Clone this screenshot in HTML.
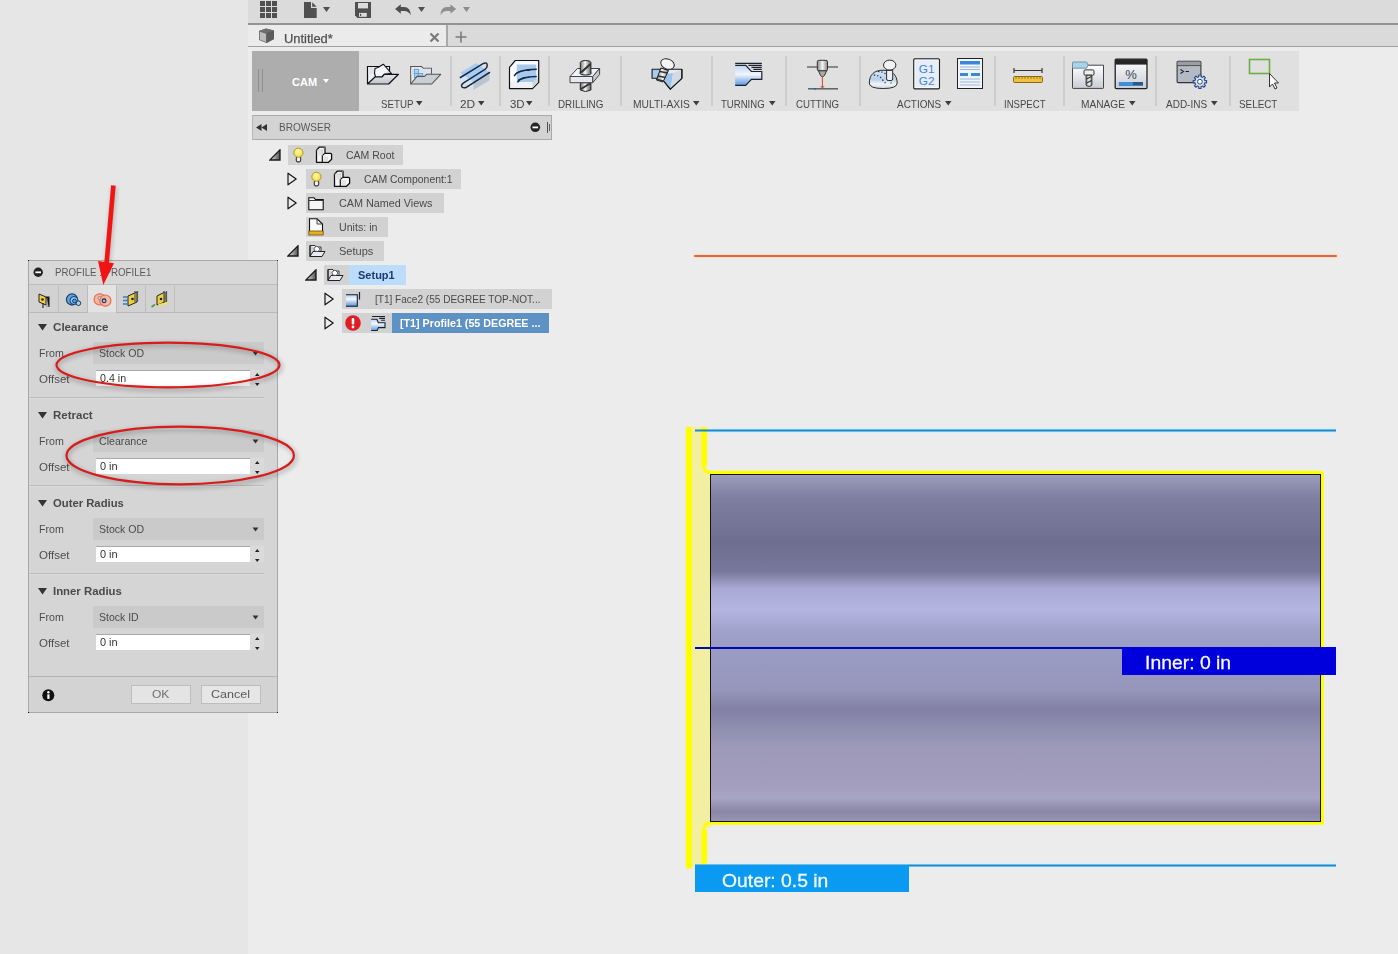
<!DOCTYPE html>
<html><head><meta charset="utf-8">
<style>
*{margin:0;padding:0;box-sizing:border-box}
html,body{width:1398px;height:954px;overflow:hidden;background:#ececec;font-family:"Liberation Sans",sans-serif;position:relative}
.a{position:absolute;display:block}
.t{position:absolute;white-space:nowrap;line-height:1}
</style></head><body>
<div class="a" style="left:0px;top:0px;width:248px;height:954px;background:#e6e6e6;"></div>
<div class="a" style="left:248px;top:0px;width:1150px;height:23px;background:#dbdbdb;"></div>
<div class="a" style="left:248px;top:23px;width:1150px;height:2px;background:#939393;"></div>
<div class="a" style="left:248px;top:25px;width:1150px;height:21px;background:#dadada;"></div>
<div class="a" style="left:248px;top:25px;width:198px;height:21px;background:#ebebeb;"></div>
<div class="a" style="left:446px;top:25px;width:2px;height:21px;background:#a9a9a9;"></div>
<div class="a" style="left:248px;top:46px;width:1150px;height:1px;background:#a0a0a0;"></div>
<svg class="a" style="left:260px;top:1px;" width="17" height="17" viewBox="0 0 17 17"><rect x="0" y="0" width="5" height="5" fill="#505050"/><rect x="0" y="6" width="5" height="5" fill="#505050"/><rect x="0" y="12" width="5" height="5" fill="#505050"/><rect x="6" y="0" width="5" height="5" fill="#505050"/><rect x="6" y="6" width="5" height="5" fill="#505050"/><rect x="6" y="12" width="5" height="5" fill="#505050"/><rect x="12" y="0" width="5" height="5" fill="#505050"/><rect x="12" y="6" width="5" height="5" fill="#505050"/><rect x="12" y="12" width="5" height="5" fill="#505050"/></svg>
<svg class="a" style="left:304px;top:2px;" width="13" height="16" viewBox="0 0 13 16"><path d="M0 0H7V6H12.7V16H0Z" fill="#505050"/><path d="M8.2 0.3L12.7 4.8H8.2Z" fill="#505050"/></svg>
<svg class="a" style="left:323px;top:7px;" width="8" height="6" viewBox="0 0 8 6"><path d="M0 0H7L3.5 5Z" fill="#505050"/></svg>
<svg class="a" style="left:355px;top:2px;" width="16" height="16" viewBox="0 0 16 16"><path d="M0 0H16V16H2.5L0 13.5Z" fill="#505050"/><rect x="3" y="1" width="10" height="5.4" fill="#dcdcdc"/><rect x="4" y="10.9" width="7.8" height="3.9" fill="#dcdcdc"/><rect x="5" y="11.8" width="1.2" height="2.2" fill="#505050"/></svg>
<svg class="a" style="left:394px;top:3px;" width="18" height="14" viewBox="0 0 18 14"><path d="M1.1 6L6.8 1.2V3.9H10Q16.7 3.9 16.7 12.6Q15 8.1 10 8.1H6.8V10.8Z" fill="#505050"/></svg>
<svg class="a" style="left:418px;top:7px;" width="8" height="6" viewBox="0 0 8 6"><path d="M0 0H7L3.5 5Z" fill="#505050"/></svg>
<svg class="a" style="left:440px;top:3px;" width="17" height="14" viewBox="0 0 17 14"><path d="M16.1 6L10.4 1.2V3.9H7Q0.5 3.9 0.5 12.6Q2.2 8.1 7 8.1H10.4V10.8Z" fill="#8e8e8e"/></svg>
<svg class="a" style="left:463px;top:7px;" width="8" height="6" viewBox="0 0 8 6"><path d="M0 0H7L3.5 5Z" fill="#8a8a8a"/></svg>
<svg class="a" style="left:258px;top:28px;" width="17" height="16" viewBox="0 0 17 16"><path d="M1 3L8 0.5L16 2.5L16 11L8.5 15L1 12Z" fill="#6a6a6a"/><path d="M1 3L8 0.5L16 2.5L8.5 5Z" fill="#6e6e6e"/><path d="M8.5 5L16 2.5V11L8.5 15Z" fill="#5c5c5c"/><path d="M1.8 3.8L8 5.7V14L1.8 11.5Z" fill="#bcbcbc"/></svg>
<div class="t" style="left:284px;top:33px;font-size:12.5px;color:#505050;font-weight:400;letter-spacing:0px;transform:scaleX(1.0326);transform-origin:0 0;-webkit-text-stroke:0.25px #505050;">Untitled*</div>
<svg class="a" style="left:429px;top:32px;" width="11" height="11" viewBox="0 0 11 11"><path d="M1.5 1.5L9.5 9.5M9.5 1.5L1.5 9.5" stroke="#7a7a7a" stroke-width="2.2"/></svg>
<svg class="a" style="left:455px;top:31px;" width="12" height="12" viewBox="0 0 12 12"><path d="M6 0.5V11.5M0.5 6H11.5" stroke="#7a7a7a" stroke-width="1.6"/></svg>
<div class="a" style="left:252px;top:51px;width:1047px;height:60px;background:#e0e0e0;"></div>
<div class="a" style="left:252px;top:51px;width:107px;height:60px;background:#adadad;"></div>
<div class="a" style="left:258px;top:69px;width:1px;height:23px;background:#8e8e8e;"></div>
<div class="a" style="left:262px;top:69px;width:1px;height:23px;background:#8e8e8e;"></div>
<div class="t" style="left:292px;top:77px;font-size:11px;color:#ffffff;font-weight:700;letter-spacing:0px;">CAM</div>
<svg class="a" style="left:323px;top:79px;" width="7" height="5" viewBox="0 0 7 5"><path d="M0 0H6L3 4Z" fill="#fff"/></svg>
<div class="a" style="left:450px;top:56px;width:2px;height:50px;background:#cdcdcd;"></div>
<div class="a" style="left:499px;top:56px;width:2px;height:50px;background:#cdcdcd;"></div>
<div class="a" style="left:548px;top:56px;width:2px;height:50px;background:#cdcdcd;"></div>
<div class="a" style="left:620px;top:56px;width:2px;height:50px;background:#cdcdcd;"></div>
<div class="a" style="left:711px;top:56px;width:2px;height:50px;background:#cdcdcd;"></div>
<div class="a" style="left:785px;top:56px;width:2px;height:50px;background:#cdcdcd;"></div>
<div class="a" style="left:859px;top:56px;width:2px;height:50px;background:#cdcdcd;"></div>
<div class="a" style="left:994px;top:56px;width:2px;height:50px;background:#cdcdcd;"></div>
<div class="a" style="left:1063px;top:56px;width:2px;height:50px;background:#cdcdcd;"></div>
<div class="a" style="left:1155px;top:56px;width:2px;height:50px;background:#cdcdcd;"></div>
<div class="a" style="left:1229px;top:56px;width:2px;height:50px;background:#cdcdcd;"></div>
<div class="t" style="left:380.6px;top:100px;font-size:10.3px;color:#474747;font-weight:400;letter-spacing:0px;transform:scaleX(0.9426);transform-origin:0 0;">SETUP</div>
<svg class="a" style="left:415.5px;top:101px;" width="7" height="5" viewBox="0 0 7 5"><path d="M0 0H6.5L3.25 4.5Z" fill="#3c3c3c"/></svg>
<div class="t" style="left:460.3px;top:100px;font-size:10.3px;color:#474747;font-weight:400;letter-spacing:0px;transform:scaleX(1.1530);transform-origin:0 0;">2D</div>
<svg class="a" style="left:477.5px;top:101px;" width="7" height="5" viewBox="0 0 7 5"><path d="M0 0H6.5L3.25 4.5Z" fill="#3c3c3c"/></svg>
<div class="t" style="left:509.6px;top:100px;font-size:10.3px;color:#474747;font-weight:400;letter-spacing:0px;transform:scaleX(1.1119);transform-origin:0 0;">3D</div>
<svg class="a" style="left:525.5px;top:101px;" width="7" height="5" viewBox="0 0 7 5"><path d="M0 0H6.5L3.25 4.5Z" fill="#3c3c3c"/></svg>
<div class="t" style="left:558.4px;top:100px;font-size:10.3px;color:#474747;font-weight:400;letter-spacing:0px;transform:scaleX(0.9555);transform-origin:0 0;">DRILLING</div>
<div class="t" style="left:632.9px;top:100px;font-size:10.3px;color:#474747;font-weight:400;letter-spacing:0px;transform:scaleX(0.9982);transform-origin:0 0;">MULTI-AXIS</div>
<svg class="a" style="left:692.5px;top:101px;" width="7" height="5" viewBox="0 0 7 5"><path d="M0 0H6.5L3.25 4.5Z" fill="#3c3c3c"/></svg>
<div class="t" style="left:721.4px;top:100px;font-size:10.3px;color:#474747;font-weight:400;letter-spacing:0px;transform:scaleX(0.9308);transform-origin:0 0;">TURNING</div>
<svg class="a" style="left:768.5px;top:101px;" width="7" height="5" viewBox="0 0 7 5"><path d="M0 0H6.5L3.25 4.5Z" fill="#3c3c3c"/></svg>
<div class="t" style="left:795.6px;top:100px;font-size:10.3px;color:#474747;font-weight:400;letter-spacing:0px;transform:scaleX(0.9388);transform-origin:0 0;">CUTTING</div>
<div class="t" style="left:897.4px;top:100px;font-size:10.3px;color:#474747;font-weight:400;letter-spacing:0px;transform:scaleX(0.9653);transform-origin:0 0;">ACTIONS</div>
<svg class="a" style="left:945px;top:101px;" width="7" height="5" viewBox="0 0 7 5"><path d="M0 0H6.5L3.25 4.5Z" fill="#3c3c3c"/></svg>
<div class="t" style="left:1004.4px;top:100px;font-size:10.3px;color:#474747;font-weight:400;letter-spacing:0px;transform:scaleX(0.9310);transform-origin:0 0;">INSPECT</div>
<div class="t" style="left:1080.6px;top:100px;font-size:10.3px;color:#474747;font-weight:400;letter-spacing:0px;transform:scaleX(0.9860);transform-origin:0 0;">MANAGE</div>
<svg class="a" style="left:1128.5px;top:101px;" width="7" height="5" viewBox="0 0 7 5"><path d="M0 0H6.5L3.25 4.5Z" fill="#3c3c3c"/></svg>
<div class="t" style="left:1165.5px;top:100px;font-size:10.3px;color:#474747;font-weight:400;letter-spacing:0px;transform:scaleX(0.9706);transform-origin:0 0;">ADD-INS</div>
<svg class="a" style="left:1210.5px;top:101px;" width="7" height="5" viewBox="0 0 7 5"><path d="M0 0H6.5L3.25 4.5Z" fill="#3c3c3c"/></svg>
<div class="t" style="left:1239.4px;top:100px;font-size:10.3px;color:#474747;font-weight:400;letter-spacing:0px;transform:scaleX(0.9582);transform-origin:0 0;">SELECT</div>
<svg class="a" style="left:362px;top:56px;" width="84" height="36" viewBox="0 0 84 36"><defs>
<linearGradient id="gw" x1="0" y1="0" x2="0" y2="1"><stop offset="0" stop-color="#ffffff"/><stop offset="1" stop-color="#c8ccd4"/></linearGradient>
<linearGradient id="gb" x1="0" y1="0" x2="0" y2="1"><stop offset="0" stop-color="#d6e6f8"/><stop offset="0.5" stop-color="#4a90d8"/><stop offset="1" stop-color="#d6e6f8"/></linearGradient>
<linearGradient id="gm" x1="0" y1="0" x2="1" y2="0"><stop offset="0" stop-color="#888"/><stop offset="0.5" stop-color="#f4f4f4"/><stop offset="1" stop-color="#888"/></linearGradient>
</defs><defs><linearGradient id="gbox" x1="0" y1="0" x2="1" y2="1"><stop offset="0" stop-color="#ffffff"/><stop offset="0.6" stop-color="#f0f4fa"/><stop offset="1" stop-color="#8ea8c8"/></linearGradient><linearGradient id="gfl" x1="0" y1="0" x2="0" y2="1"><stop offset="0" stop-color="#e4e6ea"/><stop offset="1" stop-color="#c0c4cc"/></linearGradient></defs><path d="M5.5 28V10.5H27.5V18" fill="#eef0f4" stroke="#111" stroke-width="1.2"/><path d="M6 11H27V18H6Z" fill="#e2e6ec"/><path d="M13 12.5L16 11.5L21.3 8.2L29.5 17.5L22.3 18.3L20 21H13.5L12.5 17Z" fill="url(#gbox)" stroke="#111" stroke-width="1.1" stroke-linejoin="round"/><path d="M5.5 28H26.7L36.5 18.3H22.3L20 21H13L5.5 28Z" fill="url(#gfl)" stroke="#111" stroke-width="1.2" stroke-linejoin="round"/><path d="M48.7 28V10.5H59.5L61.3 12.3H69.4V18.3" fill="#e8ebf0" stroke="#555" stroke-width="1.1"/><path d="M49.2 12.8H69V19H49.2Z" fill="#dde2ea"/><rect x="52.3" y="13.2" width="4.2" height="4.2" fill="#a8d0f4" stroke="#5a9ad8" stroke-width="0.8"/><rect x="52.3" y="17.4" width="4.2" height="4.2" fill="#a8d0f4" stroke="#5a9ad8" stroke-width="0.8"/><rect x="56.5" y="17.4" width="4.2" height="4.2" fill="#a8d0f4" stroke="#5a9ad8" stroke-width="0.8"/><path d="M48.7 28H69.7L78.7 18.3H64.6L62.5 20.4H55L48.7 28Z" fill="#c8ccd4" fill-opacity="0.92" stroke="#555" stroke-width="1.1" stroke-linejoin="round"/></svg>
<svg class="a" style="left:454px;top:56px;" width="42" height="38" viewBox="0 0 42 38"><path d="M6 17L22 7L35 16L19.5 26Z" fill="#a8ccf0"/><path d="M6 17V24L19.5 34V26Z" fill="#d8e4f0"/><path d="M19.5 26V34L35.5 24.3V16Z" fill="#b8c4d0"/><path d="M6.4 21.5L29 7.6Q33.5 5.5 33.2 10Q33 12 31 13.3L10 26.6Q6.5 29 8 31Q10 32.8 13 30.8L35.5 16.5" fill="none" stroke="#1a2a48" stroke-width="1.5" stroke-linecap="round"/></svg>
<svg class="a" style="left:504px;top:55px;" width="42" height="38" viewBox="0 0 42 38"><path d="M5.5 12.4L11.3 5.5H34.7V27.4L28.5 33.6H5.5Z" fill="#eef2f6" stroke="#111" stroke-width="1.2" stroke-linejoin="round"/><path d="M6.5 12.5L11.8 6.5H33.7V10H12.8V27H6.5Z" fill="#fafcff"/><rect x="12.8" y="9.5" width="19.3" height="17.5" fill="#a8c8ec"/><path d="M28.5 27.5L33.8 22V27L28.5 32.8Z" fill="#d0d6de"/><path d="M10.2 21.2Q13 14.6 32.8 14.2M13.5 27.4Q16.8 21.5 32.8 21.5" fill="none" stroke="#10284a" stroke-width="1.5"/><path d="M11 19Q16 15 26 15.5M14 25Q18 22 26 22.3" fill="none" stroke="#10284a" stroke-width="0.9"/></svg>
<svg class="a" style="left:504px;top:55px;" width="102" height="38" viewBox="0 0 102 38"><defs><linearGradient id="gdr" x1="0" y1="0" x2="1" y2="0"><stop offset="0" stop-color="#707070"/><stop offset="0.45" stop-color="#f8f8f8"/><stop offset="1" stop-color="#606060"/></linearGradient></defs><path d="M76.3 27.7V35L81.5 36.5L86.9 35V27.7Z" fill="url(#gdr)" stroke="#222" stroke-width="1"/><path d="M77 34L86 28.5" stroke="#333" stroke-width="2"/><path d="M66 21.5L73.4 13.5H95.6L88.7 21.5Z" fill="#f0f4f8" stroke="#444" stroke-width="1"/><path d="M66 21.5H88.7V27.7H66Z" fill="#e6e8ec" stroke="#444" stroke-width="1"/><path d="M88.7 21.5L95.6 13.5V19.5L88.7 27.7Z" fill="#c8ccd2" stroke="#444" stroke-width="1"/><ellipse cx="81.6" cy="18" rx="7" ry="2.8" fill="#9cc8ee"/><path d="M76.3 7.5Q76.3 5.5 81.6 5.5Q86.9 5.5 86.9 7.5V18.5Q86.9 20 81.6 20Q76.3 20 76.3 18.5Z" fill="url(#gdr)" stroke="#222" stroke-width="1"/><path d="M77 17.5L86.5 9" stroke="#333" stroke-width="2.2"/></svg>
<svg class="a" style="left:646px;top:54px;" width="44" height="40" viewBox="0 0 44 40"><path d="M6.1 15.3H35.9V24.3L24.3 35.2L18 27.3L12 24.3H6.1Z" fill="#a8ccf0" stroke="#1a1a1a" stroke-width="1.1" stroke-linejoin="round"/><path d="M22 16H35V24L24.3 34.5L21 29Z" fill="#e8ecf2"/><path d="M19.5 20L27 19L24.8 34.3L18.2 27.5Z" fill="#9cc4ec"/><path d="M27 19L35 16V24L25 34Z" fill="#d4dae2"/><path d="M35.9 15.3V24.3L24.3 35.2L18 27.3" fill="none" stroke="#1a1a1a" stroke-width="1.1"/><path d="M14.8 14L22.5 16.5L17 28L10.5 26Z" fill="url(#gm)" stroke="#1a1a1a" stroke-width="1"/><path d="M14 17.5L21.5 19M12 22L19.5 23.5M11 25.5L17.5 27" stroke="#333" stroke-width="1.5"/><ellipse cx="21.5" cy="10" rx="7" ry="5" fill="#f4f4f6" stroke="#222" stroke-width="1" transform="rotate(22 21.5 10)"/></svg>
<svg class="a" style="left:728px;top:56px;" width="42" height="36" viewBox="0 0 42 36"><defs><linearGradient id="gt" x1="0" y1="0" x2="0" y2="1"><stop offset="0" stop-color="#b8d8f8"/><stop offset="0.45" stop-color="#f4f4fc"/><stop offset="1" stop-color="#5a98e0"/></linearGradient></defs><path d="M7.2 9.4H17.7L23.4 15.5H33.8V23.4H23.4L17.7 29.4H7.2Z" fill="url(#gt)"/><path d="M7.2 9.4H17.7L23.4 15.5H33.8V23.4H23.4L17.7 29.4H7.2" fill="none" stroke="#1a2230" stroke-width="1.2"/><path d="M7.2 7.4H33.8M20.4 9.4H33.8M23.4 11.4H33.8M25.3 13.4H33.8" stroke="#1a2230" stroke-width="1.2"/></svg>
<svg class="a" style="left:806px;top:59px;" width="34" height="32" viewBox="0 0 34 32"><path d="M1 8H11M21.5 8H32" stroke="#333" stroke-width="1.2"/><rect x="11.3" y="1.3" width="10.2" height="10.5" rx="1.5" fill="url(#gm)" stroke="#333" stroke-width="1"/><path d="M12.5 11.8H20.5L18.5 16.5L16.4 18L14.5 16.5Z" fill="#aaa" stroke="#333" stroke-width="1"/><path d="M16.4 18V28.5" stroke="#e04020" stroke-width="1"/><path d="M14.6 27L16.4 29L18.2 27" fill="none" stroke="#e04020" stroke-width="1"/><path d="M2 29.8H32" stroke="#606870" stroke-width="1.6"/><path d="M8 29.8H10" stroke="#2060c0" stroke-width="1.6"/></svg>
<svg class="a" style="left:864px;top:56px;" width="40" height="36" viewBox="0 0 40 36"><defs><linearGradient id="gj" x1="0" y1="0" x2="0" y2="1"><stop offset="0" stop-color="#d8e6f4"/><stop offset="0.5" stop-color="#b8d0ec"/><stop offset="0.75" stop-color="#f0f4f8"/><stop offset="1" stop-color="#d8dce2"/></linearGradient></defs><path d="M5.3 27C5.3 19 10 14.2 19 14.2C28 14.2 33.2 19 33.2 27Q33.2 32.5 19.2 32.5Q5.3 32.5 5.3 27Z" fill="url(#gj)" stroke="#2a2a2a" stroke-width="1"/><path d="M9.8 19.2Q15 19 17.5 22.5Q20 26 22.3 27.5M14 15.5Q19 15.5 21.5 17.7M27 26.5V27.5" fill="none" stroke="#1a2a48" stroke-width="1.2" stroke-dasharray="1.3 2"/><path d="M22.6 14.3H28.7V23Q28.7 24.5 27 24.5H24.3Q22.6 24.5 22.6 23Z" fill="#f0f0f2" stroke="#2a2a2a" stroke-width="1"/><ellipse cx="25.7" cy="9.1" rx="6.2" ry="5" fill="#f2f2f4" stroke="#2a2a2a" stroke-width="1"/></svg>
<svg class="a" style="left:913px;top:58px;" width="28" height="32" viewBox="0 0 28 32"><rect x="0.8" y="0.8" width="25.6" height="30" rx="1" fill="#e6edf5" stroke="#222" stroke-width="1.3"/><rect x="2" y="2" width="23.2" height="27.6" fill="none" stroke="#fafcff" stroke-width="0.8"/><text x="13.6" y="15" font-family="Liberation Sans" font-size="11.8" fill="#4088d8" text-anchor="middle">G1</text><text x="13.6" y="27.3" font-family="Liberation Sans" font-size="11.8" fill="#4088d8" text-anchor="middle">G2</text></svg>
<svg class="a" style="left:957px;top:58px;" width="27" height="32" viewBox="0 0 27 32"><rect x="0.5" y="0.5" width="25" height="30" fill="#f0f4f8" stroke="#222" stroke-width="1"/><rect x="3" y="3" width="20" height="3.5" fill="#3a88d8"/><path d="M3 9H23M3 11.5H23" stroke="#9ab8d8" stroke-width="1"/><rect x="3" y="15" width="8" height="3" fill="#3a88d8"/><rect x="14" y="15" width="9" height="3" fill="#3a88d8"/><path d="M3 21H23M3 24H23M3 27H23" stroke="#9ab8d8" stroke-width="1"/></svg>
<svg class="a" style="left:1013px;top:66px;" width="31" height="18" viewBox="0 0 31 18"><path d="M1 2V7M1 4.5H29M29 2V7" stroke="#333" stroke-width="1.2"/><rect x="0.5" y="10.5" width="29" height="6" rx="1" fill="#f0c040" stroke="#8a6a10" stroke-width="1"/><path d="M3 11V13M6 11V13M9 11V13M12 11V13M15 11V13M18 11V13M21 11V13M24 11V13M27 11V13" stroke="#8a6a10" stroke-width="0.8"/></svg>
<svg class="a" style="left:1066px;top:54px;" width="42" height="38" viewBox="0 0 42 38"><path d="M6.5 11.2H37.5V33.8Q37.5 34.4 36.9 34.4H7.1Q6.5 34.4 6.5 33.8Z" fill="url(#gw)" stroke="#444" stroke-width="1"/><path d="M6.5 14.2V8.6Q6.5 8 7.1 8H20.5L22.2 11.2L20.5 14.2Z" fill="#a8d4ec" stroke="#6a8aa0" stroke-width="0.9"/><rect x="18" y="15.9" width="10" height="5.3" rx="1.2" fill="#f0f0f0" stroke="#333" stroke-width="1"/><path d="M20.1 21.2H25.9V31Q25.9 32 23 32.4Q20.1 32 20.1 31Z" fill="url(#gm)" stroke="#333" stroke-width="1"/><path d="M20.5 25L25.5 22.5M20.5 29L25.5 26.5" stroke="#333" stroke-width="1.2"/></svg>
<svg class="a" style="left:1114px;top:58px;" width="34" height="32" viewBox="0 0 34 32"><rect x="1.2" y="1.2" width="31.8" height="29.4" rx="1" fill="url(#gw)" stroke="#222" stroke-width="1.3"/><rect x="1.2" y="1.2" width="31.8" height="5.4" fill="#262626"/><text x="17" y="20.5" font-family="Liberation Sans" font-size="13" fill="#34465a" text-anchor="middle">%</text><rect x="4.9" y="24" width="24.1" height="3.7" fill="#2a5a8a"/><rect x="4.9" y="24" width="14" height="3.7" fill="#3a90dc"/></svg>
<svg class="a" style="left:1176px;top:60px;" width="32" height="30" viewBox="0 0 32 30"><rect x="1.1" y="1.2" width="23.8" height="21.4" rx="1" fill="#b4bac4" stroke="#333" stroke-width="1.1"/><rect x="1.6" y="1.7" width="22.8" height="3.6" fill="#9a9ea6"/><path d="M1.1 5.6H24.9" stroke="#444" stroke-width="0.9"/><path d="M4.5 9.5L7.5 11.5L4.5 13.5M9.5 11.5H13" fill="none" stroke="#222" stroke-width="1.1"/><path d="M30.60 20.55 L30.60 22.85 L28.78 22.80 L28.13 24.37 L29.45 25.63 L27.83 27.25 L26.57 25.93 L25.00 26.58 L25.05 28.40 L22.75 28.40 L22.80 26.58 L21.23 25.93 L19.97 27.25 L18.35 25.63 L19.67 24.37 L19.02 22.80 L17.20 22.85 L17.20 20.55 L19.02 20.60 L19.67 19.03 L18.35 17.77 L19.97 16.15 L21.23 17.47 L22.80 16.82 L22.75 15.00 L25.05 15.00 L25.00 16.82 L26.57 17.47 L27.83 16.15 L29.45 17.77 L28.13 19.03 L28.78 20.60Z" fill="#dce6f2" stroke="#2a4a80" stroke-width="1.1" stroke-linejoin="round"/><circle cx="23.9" cy="21.7" r="2.4" fill="#fff" stroke="#2a4a80" stroke-width="1"/></svg>
<svg class="a" style="left:1248px;top:58px;" width="32" height="32" viewBox="0 0 32 32"><rect x="1.5" y="1.5" width="20" height="14" fill="none" stroke="#6ab040" stroke-width="1.6"/><path d="M21.5 15.5V29L24.5 26L27 31L29 30L26.5 25H30.5Z" fill="#fafafa" stroke="#333" stroke-width="1" stroke-linejoin="round"/></svg>
<svg class="a" style="left:248px;top:112px;" width="1150" height="842" viewBox="0 0 1150 842"><defs>
<linearGradient id="part" x1="0" y1="0" x2="0" y2="1">
<stop offset="0" stop-color="#9c9cbc"/>
<stop offset="0.07" stop-color="#7e7ea0"/>
<stop offset="0.2" stop-color="#6e6e90"/>
<stop offset="0.28" stop-color="#78789c"/>
<stop offset="0.33" stop-color="#aaaad6"/>
<stop offset="0.39" stop-color="#b4b4e0"/>
<stop offset="0.45" stop-color="#a0a2cc"/>
<stop offset="0.5" stop-color="#9a9cc4"/>
<stop offset="0.62" stop-color="#9696bc"/>
<stop offset="0.675" stop-color="#8280a4"/>
<stop offset="0.735" stop-color="#9090b0"/>
<stop offset="0.78" stop-color="#9c98b8"/>
<stop offset="0.9" stop-color="#a49ebe"/>
<stop offset="0.93" stop-color="#a8a4c4"/>
<stop offset="0.97" stop-color="#8a86a6"/>
<stop offset="1" stop-color="#9a96b6"/>
</linearGradient>
<filter id="glow" x="-5%" y="-50%" width="110%" height="200%"><feGaussianBlur stdDeviation="1.2"/></filter>
</defs><path d="M446.5 144H1088" stroke="#ffe0d0" stroke-width="5" stroke-linecap="round"/><path d="M447 144H1088" stroke="#d46a48" stroke-width="2.2" stroke-linecap="round"/><rect x="443" y="315" width="12" height="439" fill="#f2f0a0"/><rect x="454.5" y="358" width="8" height="358" fill="#f2f0a0"/><rect x="437.79999999999995" y="314.8" width="6" height="442" rx="2" fill="#ffff00"/><path d="M456.29999999999995 315V355Q456.29999999999995 360.4 462 360.4H1072.5Q1074.2 360.6 1074.2 362.5V711.1H462Q456.29999999999995 711.1 456.29999999999995 717V751.5" fill="none" stroke="#ffff00" stroke-width="3.3"/><path d="M456.29999999999995 315V354M456.29999999999995 718V751.5" fill="none" stroke="#ffff00" stroke-width="5.5"/><rect x="462" y="362" width="611" height="348" fill="url(#part)"/><rect x="462.5" y="362.5" width="610" height="347" fill="none" stroke="#151515" stroke-width="1"/><path d="M460 318.5H1088" stroke="#d0f0ff" stroke-width="5"/><path d="M447 318.5H1088" stroke="#1a86cc" stroke-width="2.2"/><path d="M460 753.5H1088" stroke="#d0f0ff" stroke-width="4"/><path d="M447 753.5H1088" stroke="#1a86cc" stroke-width="2"/><path d="M447 536H1088" stroke="#0008b0" stroke-width="2"/></svg>
<div class="a" style="left:695px;top:865px;width:214px;height:27px;background:#0a9af2;"></div>
<div class="t" style="left:722px;top:871px;font-size:19px;color:#f4ffff;font-weight:400;letter-spacing:0px;transform:scaleX(1.0169);transform-origin:0 0;-webkit-text-stroke:0.3px #f4ffff;">Outer: 0.5 in</div>
<div class="a" style="left:1122px;top:647px;width:214px;height:28px;background:#0000dc;"></div>
<div class="t" style="left:1145.2px;top:653px;font-size:19px;color:#f8f8ff;font-weight:400;letter-spacing:0px;transform:scaleX(1.0194);transform-origin:0 0;-webkit-text-stroke:0.3px #f8f8ff;">Inner: 0 in</div>
<div class="a" style="left:252px;top:115px;width:300px;height:25px;background:#d3d3d3;border-top:1px solid #a9a9a9;border-bottom:1px solid #ababab;border-left:1px solid #b8b8b8;border-right:1px solid #a9a9a9"></div>
<svg class="a" style="left:256px;top:124px;" width="12" height="8" viewBox="0 0 12 8"><path d="M5.5 0V7L0 3.5Z M11 0V7L5.5 3.5Z" fill="#333"/></svg>
<div class="t" style="left:279px;top:123px;font-size:10.3px;color:#585858;font-weight:400;letter-spacing:0px;transform:scaleX(0.9791);transform-origin:0 0;">BROWSER</div>
<svg class="a" style="left:530px;top:122px;" width="11" height="11" viewBox="0 0 11 11"><circle cx="5.3" cy="5.3" r="4.8" fill="#262626"/><rect x="2.5" y="4.5" width="5.6" height="1.8" fill="#fff"/></svg>
<div class="a" style="left:547px;top:122px;width:1px;height:11px;background:#505050;"></div>
<div class="a" style="left:549px;top:124px;width:1px;height:7px;background:#606060;"></div>
<svg class="a" style="left:269px;top:149px;" width="12" height="12" viewBox="0 0 12 12"><defs><linearGradient id="ge" x1="0" y1="0" x2="1" y2="0"><stop offset="0" stop-color="#f0f0f0"/><stop offset="1" stop-color="#505050"/></linearGradient></defs><path d="M11 0.8V11H0.8Z" fill="url(#ge)" stroke="#1a1a1a" stroke-width="1.3" stroke-linejoin="miter"/></svg>
<div class="a" style="left:288px;top:145px;width:115px;height:20px;background:#d2d2d2;"></div>
<svg class="a" style="left:293px;top:147px;" width="12" height="16" viewBox="0 0 12 16"><defs><radialGradient id="gbulb" cx="0.45" cy="0.4" r="0.6"><stop offset="0" stop-color="#fff8a0"/><stop offset="1" stop-color="#f0dc40"/></radialGradient></defs><rect x="3.3" y="9.5" width="4.4" height="5.4" rx="1.6" fill="#f4f4f8" stroke="#333" stroke-width="1.1"/><circle cx="5.4" cy="5.7" r="4.6" fill="url(#gbulb)" stroke="#a89030" stroke-width="0.9"/></svg>
<svg class="a" style="left:315px;top:146px;" width="18" height="18" viewBox="0 0 18 18"><path d="M1.5 4.1L4.2 1.2H10V7.4H15.8L16.6 8.2V13.2L13.5 16.3H1.5Z" fill="#f6f6f6" stroke="#111" stroke-width="1.3" stroke-linejoin="round"/><path d="M2.5 5H7V9.5H2.5Z M8.5 10.5H13V15H8.5Z" fill="#e4e4e4"/><path d="M7.3 16.3V9.7L9.6 7.4" fill="none" stroke="#111" stroke-width="1.2"/><path d="M1.5 4.1H7.3L10 1.2M7.3 4.1V9.7" fill="none" stroke="#bbb" stroke-width="0.8"/></svg>
<div class="t" style="left:345.6px;top:150px;font-size:10.5px;color:#4a4a4a;font-weight:400;letter-spacing:0px;transform:scaleX(1.0003);transform-origin:0 0;">CAM Root</div>
<svg class="a" style="left:287px;top:172px;" width="11" height="14" viewBox="0 0 11 14"><path d="M1 1.2L9.2 7L1 12.8Z" fill="none" stroke="#161616" stroke-width="1.2" stroke-linejoin="round"/></svg>
<div class="a" style="left:306px;top:169px;width:155px;height:20px;background:#d2d2d2;"></div>
<svg class="a" style="left:311px;top:171px;" width="12" height="16" viewBox="0 0 12 16"><defs><radialGradient id="gbulb" cx="0.45" cy="0.4" r="0.6"><stop offset="0" stop-color="#fff8a0"/><stop offset="1" stop-color="#f0dc40"/></radialGradient></defs><rect x="3.3" y="9.5" width="4.4" height="5.4" rx="1.6" fill="#f4f4f8" stroke="#333" stroke-width="1.1"/><circle cx="5.4" cy="5.7" r="4.6" fill="url(#gbulb)" stroke="#a89030" stroke-width="0.9"/></svg>
<svg class="a" style="left:333px;top:170px;" width="18" height="18" viewBox="0 0 18 18"><path d="M1.5 4.1L4.2 1.2H10V7.4H15.8L16.6 8.2V13.2L13.5 16.3H1.5Z" fill="#f6f6f6" stroke="#111" stroke-width="1.3" stroke-linejoin="round"/><path d="M2.5 5H7V9.5H2.5Z M8.5 10.5H13V15H8.5Z" fill="#e4e4e4"/><path d="M7.3 16.3V9.7L9.6 7.4" fill="none" stroke="#111" stroke-width="1.2"/><path d="M1.5 4.1H7.3L10 1.2M7.3 4.1V9.7" fill="none" stroke="#bbb" stroke-width="0.8"/></svg>
<div class="t" style="left:364.4px;top:174px;font-size:10.5px;color:#474747;font-weight:400;letter-spacing:0px;transform:scaleX(0.9915);transform-origin:0 0;">CAM Component:1</div>
<svg class="a" style="left:287px;top:196px;" width="11" height="14" viewBox="0 0 11 14"><path d="M1 1.2L9.2 7L1 12.8Z" fill="none" stroke="#161616" stroke-width="1.2" stroke-linejoin="round"/></svg>
<div class="a" style="left:306px;top:193px;width:138px;height:20px;background:#d2d2d2;"></div>
<svg class="a" style="left:308px;top:197px;" width="17" height="14" viewBox="0 0 17 14"><path d="M0.8 0.8H6L7.5 2.5H15.2V12.8H0.8Z" fill="#f6f6f6" stroke="#111" stroke-width="1.1"/><path d="M0.8 3.5H15" stroke="#222" stroke-width="0.9"/></svg>
<div class="t" style="left:338.5px;top:198px;font-size:10.5px;color:#4a4a4a;font-weight:400;letter-spacing:0px;transform:scaleX(1.0290);transform-origin:0 0;">CAM Named Views</div>
<div class="a" style="left:306px;top:217px;width:82px;height:20px;background:#d2d2d2;"></div>
<svg class="a" style="left:308px;top:218px;" width="17" height="18" viewBox="0 0 17 18"><path d="M1.5 0.8H9L14.5 6V14H1.5Z" fill="#fafafa" stroke="#111" stroke-width="1.1"/><path d="M9 0.8V6H14.5" fill="none" stroke="#333" stroke-width="0.9"/><rect x="0.8" y="13" width="14.4" height="4" fill="#e8b020" stroke="#6a5010" stroke-width="0.8"/></svg>
<div class="t" style="left:338.5px;top:222px;font-size:10.5px;color:#4a4a4a;font-weight:400;letter-spacing:0px;transform:scaleX(1.0139);transform-origin:0 0;">Units: in</div>
<svg class="a" style="left:287px;top:245px;" width="12" height="12" viewBox="0 0 12 12"><defs><linearGradient id="ge" x1="0" y1="0" x2="1" y2="0"><stop offset="0" stop-color="#f0f0f0"/><stop offset="1" stop-color="#505050"/></linearGradient></defs><path d="M11 0.8V11H0.8Z" fill="url(#ge)" stroke="#1a1a1a" stroke-width="1.3" stroke-linejoin="miter"/></svg>
<div class="a" style="left:306px;top:241px;width:78px;height:20px;background:#d2d2d2;"></div>
<svg class="a" style="left:309px;top:244px;" width="17" height="14" viewBox="0 0 17 14"><path d="M1 1.5H6L7 3H12V7" fill="#f4f4f4" stroke="#333" stroke-width="1"/><path d="M1 1.5V12.5L4 7.5H16L13 12.5H1Z" fill="#e8ecf0" stroke="#222" stroke-width="1" stroke-linejoin="round"/><path d="M5 4L8 2L11 5L9 7.5L5.5 7Z" fill="#fff" stroke="#444" stroke-width="0.8"/></svg>
<div class="t" style="left:338.5px;top:246px;font-size:10.5px;color:#4a4a4a;font-weight:400;letter-spacing:0px;transform:scaleX(1.0520);transform-origin:0 0;">Setups</div>
<svg class="a" style="left:305px;top:269px;" width="12" height="12" viewBox="0 0 12 12"><defs><linearGradient id="ge" x1="0" y1="0" x2="1" y2="0"><stop offset="0" stop-color="#f0f0f0"/><stop offset="1" stop-color="#505050"/></linearGradient></defs><path d="M11 0.8V11H0.8Z" fill="url(#ge)" stroke="#1a1a1a" stroke-width="1.3" stroke-linejoin="miter"/></svg>
<div class="a" style="left:324px;top:265px;width:25px;height:20px;background:#d2d2d2;"></div>
<div class="a" style="left:349px;top:265px;width:57px;height:20px;background:#bcdcfc;"></div>
<svg class="a" style="left:327px;top:268px;" width="17" height="14" viewBox="0 0 17 14"><path d="M1 1.5H6L7 3H12V7" fill="#f4f4f4" stroke="#333" stroke-width="1"/><path d="M1 1.5V12.5L4 7.5H16L13 12.5H1Z" fill="#e8ecf0" stroke="#222" stroke-width="1" stroke-linejoin="round"/><path d="M5 4L8 2L11 5L9 7.5L5.5 7Z" fill="#fff" stroke="#444" stroke-width="0.8"/></svg>
<div class="t" style="left:358.3px;top:270px;font-size:10.5px;color:#1c3a70;font-weight:700;letter-spacing:0px;transform:scaleX(1.0481);transform-origin:0 0;">Setup1</div>
<svg class="a" style="left:324px;top:292px;" width="11" height="14" viewBox="0 0 11 14"><path d="M1 1.2L9.2 7L1 12.8Z" fill="none" stroke="#161616" stroke-width="1.2" stroke-linejoin="round"/></svg>
<div class="a" style="left:342px;top:289px;width:210px;height:20px;background:#d2d2d2;"></div>
<svg class="a" style="left:344px;top:290px;" width="18" height="18" viewBox="0 0 18 18"><defs><linearGradient id="gf" x1="0" y1="0" x2="0" y2="1"><stop offset="0" stop-color="#a8ccf0"/><stop offset="0.4" stop-color="#f4f8fc"/><stop offset="1" stop-color="#4a8ad0"/></linearGradient></defs><rect x="2" y="4.2" width="11.8" height="12.5" fill="url(#gf)"/><path d="M2 4.7H13.3V16.2H2" fill="none" stroke="#1a2030" stroke-width="1.1"/><path d="M15.5 2V9.6" stroke="#1a2030" stroke-width="1.2"/></svg>
<div class="t" style="left:375px;top:294px;font-size:10.5px;color:#4a4a4a;font-weight:400;letter-spacing:0px;transform:scaleX(0.9571);transform-origin:0 0;">[T1] Face2 (55 DEGREE TOP-NOT...</div>
<svg class="a" style="left:324px;top:316px;" width="11" height="14" viewBox="0 0 11 14"><path d="M1 1.2L9.2 7L1 12.8Z" fill="none" stroke="#161616" stroke-width="1.2" stroke-linejoin="round"/></svg>
<div class="a" style="left:342px;top:313px;width:50px;height:20px;background:#d2d2d2;"></div>
<div class="a" style="left:392px;top:313px;width:157px;height:20px;background:#5f92c4;"></div>
<svg class="a" style="left:345px;top:315px;" width="16" height="16" viewBox="0 0 16 16"><circle cx="8" cy="8" r="7.8" fill="#e01c24"/><rect x="6.7" y="3" width="2.6" height="6.5" rx="1" fill="#fff"/><circle cx="8" cy="12" r="1.4" fill="#fff"/></svg>
<svg class="a" style="left:368px;top:314px;" width="20" height="18" viewBox="0 0 20 18"><defs><linearGradient id="gp" x1="0" y1="0" x2="0" y2="1"><stop offset="0" stop-color="#b8d8f8"/><stop offset="0.4" stop-color="#f4f8fc"/><stop offset="1" stop-color="#5a9ae0"/></linearGradient></defs><path d="M3.2 5.3H8.8L10.4 8.8H17V13.6H10.4L9.2 16.5H3.2Z" fill="url(#gp)"/><path d="M3.2 5.3H8.8L10.4 8.8H17V13.6H10.4L9.2 16.5H3.2" fill="none" stroke="#1a2030" stroke-width="1.1"/><path d="M4 2.5H17M11.2 4.4H17M13.2 6.2H17" stroke="#1a2030" stroke-width="1.1"/></svg>
<div class="t" style="left:399.6px;top:318px;font-size:10.5px;color:#ffffff;font-weight:700;letter-spacing:0px;transform:scaleX(1.0194);transform-origin:0 0;">[T1] Profile1 (55 DEGREE ...</div>
<div class="a" style="left:28px;top:260px;width:250px;height:453px;background:#d5d5d5;border:1px solid #a8a8a8"></div>
<div class="a" style="left:28px;top:260px;width:1px;height:1px;background:#111;"></div>
<div class="a" style="left:277px;top:260px;width:1px;height:1px;background:#333;"></div>
<div class="a" style="left:28px;top:712px;width:1px;height:1px;background:#111;"></div>
<div class="a" style="left:277px;top:712px;width:1px;height:1px;background:#111;"></div>
<div class="a" style="left:29px;top:261px;width:248px;height:23px;background:#d8d8d8;"></div>
<div class="a" style="left:29px;top:284px;width:248px;height:1px;background:#bdbdbd;"></div>
<svg class="a" style="left:33px;top:267px;" width="11" height="11" viewBox="0 0 11 11"><circle cx="5.2" cy="5.2" r="4.7" fill="#222"/><rect x="2.4" y="4.4" width="5.6" height="1.8" fill="#fff"/></svg>
<div class="t" style="left:54.7px;top:267px;font-size:10.5px;color:#5a5a5a;font-weight:400;letter-spacing:0px;transform:scaleX(0.9236);transform-origin:0 0;">PROFILE : PROFILE1</div>
<div class="a" style="left:29px;top:285px;width:248px;height:27px;background:#d2d2d2;"></div>
<div class="a" style="left:88px;top:285px;width:28px;height:27px;background:#e3e3e3;"></div>
<div class="a" style="left:58px;top:286px;width:1px;height:26px;background:#bcbcbc;"></div>
<div class="a" style="left:87px;top:286px;width:1px;height:26px;background:#bcbcbc;"></div>
<div class="a" style="left:116px;top:286px;width:1px;height:26px;background:#bcbcbc;"></div>
<div class="a" style="left:145px;top:286px;width:1px;height:26px;background:#bcbcbc;"></div>
<div class="a" style="left:174px;top:286px;width:1px;height:26px;background:#bcbcbc;"></div>
<div class="a" style="left:29px;top:312px;width:59px;height:1px;background:#b8b8b8;"></div>
<div class="a" style="left:116px;top:312px;width:161px;height:1px;background:#b8b8b8;"></div>
<svg class="a" style="left:38px;top:292px;" width="13" height="17" viewBox="0 0 13 17"><path d="M1 2L8 5V13L1 10Z" fill="#f0d040" stroke="#222" stroke-width="1"/><circle cx="4.5" cy="7.5" r="1.3" fill="#222"/><path d="M8 5H11V15M5 11V16" stroke="#222" stroke-width="1.1"/><path d="M9 6V15" stroke="#888" stroke-width="1"/></svg>
<svg class="a" style="left:60px;top:288px;" width="28" height="22" viewBox="0 0 28 22"><circle cx="12" cy="11.5" r="5.6" fill="#5aa4ec" stroke="#1a3a60" stroke-width="1.1"/><circle cx="14" cy="12.5" r="4" fill="#8cc8f8" stroke="#1a3a60" stroke-width="1"/><circle cx="14.5" cy="13" r="1.9" fill="#5aa4ec" stroke="#1a3a60" stroke-width="1"/><circle cx="18.4" cy="15.2" r="2.3" fill="#a8d4f4" stroke="#1a3a60" stroke-width="1"/></svg>
<svg class="a" style="left:88px;top:288px;" width="28" height="22" viewBox="0 0 28 22"><circle cx="11.7" cy="11.4" r="5.6" fill="#f8b8a4" stroke="#e86a48" stroke-width="1.2"/><circle cx="17.3" cy="12.6" r="5.6" fill="#f6b4a0" fill-opacity="0.85" stroke="#e86a48" stroke-width="1.2"/><circle cx="11.4" cy="10" r="1.5" fill="#f0c0c8" stroke="#888" stroke-width="0.8"/><circle cx="16.1" cy="12.8" r="1.9" fill="#a8c0e0" stroke="#1a2a50" stroke-width="1.1"/></svg>
<svg class="a" style="left:123px;top:291px;" width="17" height="17" viewBox="0 0 17 17"><path d="M5 5L14 1V11L5 15Z" fill="#f0d040" stroke="#222" stroke-width="1"/><circle cx="9.5" cy="8" r="1.3" fill="#222"/><path d="M12 0V11M14.5 0V11" stroke="#555" stroke-width="1.2"/><path d="M0 6H5M0 9.5H5M0 13H5" stroke="#3a78c8" stroke-width="1.5"/></svg>
<svg class="a" style="left:151px;top:291px;" width="18" height="17" viewBox="0 0 18 17"><path d="M6 5L14 1V11L6 14Z" fill="#f0d040" stroke="#222" stroke-width="1"/><circle cx="10" cy="8" r="1.3" fill="#222"/><path d="M13 0V11M15.5 0V11" stroke="#555" stroke-width="1.2"/><path d="M7 13L17 11V13L8 15Z" fill="#f0e060"/><path d="M0.5 16L4 13.5" stroke="#40a040" stroke-width="1.6"/></svg>
<svg class="a" style="left:38px;top:324px;" width="10" height="7" viewBox="0 0 10 7"><path d="M0 0H9L4.5 6.5Z" fill="#333"/></svg>
<div class="t" style="left:52.6px;top:322px;font-size:11px;color:#4a4a4a;font-weight:700;letter-spacing:0px;transform:scaleX(1.0545);transform-origin:0 0;">Clearance</div>
<div class="a" style="left:93px;top:342px;width:171px;height:22px;background:#cacaca;"></div>
<div class="t" style="left:38.8px;top:348px;font-size:10.5px;color:#4e4e4e;font-weight:400;letter-spacing:0px;transform:scaleX(1.0149);transform-origin:0 0;">From</div>
<div class="t" style="left:98.8px;top:348px;font-size:10.5px;color:#4a4a4a;font-weight:400;letter-spacing:0px;transform:scaleX(1.0048);transform-origin:0 0;">Stock OD</div>
<svg class="a" style="left:252px;top:351px;" width="8" height="6" viewBox="0 0 8 6"><path d="M0.5 0.5H6.5L3.5 4.5Z" fill="#333"/></svg>
<div class="a" style="left:96px;top:370px;width:154px;height:16px;background:#ffffff;border-top:1px solid #a8a8a8"></div>
<div class="a" style="left:250px;top:370px;width:14px;height:16px;background:#dadada;"></div>
<svg class="a" style="left:253.5px;top:372px;" width="7" height="15" viewBox="0 0 7 15"><path d="M1 4H5.5L3.25 1Z M1 11H5.5L3.25 14Z" fill="#222"/></svg>
<div class="t" style="left:38.8px;top:374px;font-size:10.5px;color:#4e4e4e;font-weight:400;letter-spacing:0px;transform:scaleX(1.0979);transform-origin:0 0;">Offset</div>
<div class="t" style="left:100.3px;top:373px;font-size:10.5px;color:#333;font-weight:400;letter-spacing:0px;transform:scaleX(1.0188);transform-origin:0 0;">0.4 in</div>
<div class="a" style="left:30px;top:397px;width:234px;height:1px;background:#b8b8b8;"></div>
<div class="a" style="left:30px;top:398px;width:234px;height:1px;background:#dedede;"></div>
<svg class="a" style="left:38px;top:412px;" width="10" height="7" viewBox="0 0 10 7"><path d="M0 0H9L4.5 6.5Z" fill="#333"/></svg>
<div class="t" style="left:52.6px;top:410px;font-size:11px;color:#4a4a4a;font-weight:700;letter-spacing:0px;transform:scaleX(1.0460);transform-origin:0 0;">Retract</div>
<div class="a" style="left:93px;top:430px;width:171px;height:22px;background:#cacaca;"></div>
<div class="t" style="left:38.8px;top:436px;font-size:10.5px;color:#4e4e4e;font-weight:400;letter-spacing:0px;transform:scaleX(1.0149);transform-origin:0 0;">From</div>
<div class="t" style="left:98.8px;top:436px;font-size:10.5px;color:#4a4a4a;font-weight:400;letter-spacing:0px;transform:scaleX(1.0123);transform-origin:0 0;">Clearance</div>
<svg class="a" style="left:252px;top:439px;" width="8" height="6" viewBox="0 0 8 6"><path d="M0.5 0.5H6.5L3.5 4.5Z" fill="#333"/></svg>
<div class="a" style="left:96px;top:458px;width:154px;height:16px;background:#ffffff;border-top:1px solid #a8a8a8"></div>
<div class="a" style="left:250px;top:458px;width:14px;height:16px;background:#dadada;"></div>
<svg class="a" style="left:253.5px;top:460px;" width="7" height="15" viewBox="0 0 7 15"><path d="M1 4H5.5L3.25 1Z M1 11H5.5L3.25 14Z" fill="#222"/></svg>
<div class="t" style="left:38.8px;top:462px;font-size:10.5px;color:#4e4e4e;font-weight:400;letter-spacing:0px;transform:scaleX(1.0979);transform-origin:0 0;">Offset</div>
<div class="t" style="left:100.3px;top:461px;font-size:10.5px;color:#333;font-weight:400;letter-spacing:0px;transform:scaleX(1.0386);transform-origin:0 0;">0 in</div>
<div class="a" style="left:30px;top:485px;width:234px;height:1px;background:#b8b8b8;"></div>
<div class="a" style="left:30px;top:486px;width:234px;height:1px;background:#dedede;"></div>
<svg class="a" style="left:38px;top:500px;" width="10" height="7" viewBox="0 0 10 7"><path d="M0 0H9L4.5 6.5Z" fill="#333"/></svg>
<div class="t" style="left:52.6px;top:498px;font-size:11px;color:#4a4a4a;font-weight:700;letter-spacing:0px;transform:scaleX(1.0253);transform-origin:0 0;">Outer Radius</div>
<div class="a" style="left:93px;top:518px;width:171px;height:22px;background:#cacaca;"></div>
<div class="t" style="left:38.8px;top:524px;font-size:10.5px;color:#4e4e4e;font-weight:400;letter-spacing:0px;transform:scaleX(1.0149);transform-origin:0 0;">From</div>
<div class="t" style="left:98.8px;top:524px;font-size:10.5px;color:#4a4a4a;font-weight:400;letter-spacing:0px;transform:scaleX(1.0048);transform-origin:0 0;">Stock OD</div>
<svg class="a" style="left:252px;top:527px;" width="8" height="6" viewBox="0 0 8 6"><path d="M0.5 0.5H6.5L3.5 4.5Z" fill="#333"/></svg>
<div class="a" style="left:96px;top:546px;width:154px;height:16px;background:#ffffff;border-top:1px solid #a8a8a8"></div>
<div class="a" style="left:250px;top:546px;width:14px;height:16px;background:#dadada;"></div>
<svg class="a" style="left:253.5px;top:548px;" width="7" height="15" viewBox="0 0 7 15"><path d="M1 4H5.5L3.25 1Z M1 11H5.5L3.25 14Z" fill="#222"/></svg>
<div class="t" style="left:38.8px;top:550px;font-size:10.5px;color:#4e4e4e;font-weight:400;letter-spacing:0px;transform:scaleX(1.0979);transform-origin:0 0;">Offset</div>
<div class="t" style="left:100.3px;top:549px;font-size:10.5px;color:#333;font-weight:400;letter-spacing:0px;transform:scaleX(1.0386);transform-origin:0 0;">0 in</div>
<div class="a" style="left:30px;top:573px;width:234px;height:1px;background:#b8b8b8;"></div>
<div class="a" style="left:30px;top:574px;width:234px;height:1px;background:#dedede;"></div>
<svg class="a" style="left:38px;top:588px;" width="10" height="7" viewBox="0 0 10 7"><path d="M0 0H9L4.5 6.5Z" fill="#333"/></svg>
<div class="t" style="left:52.6px;top:586px;font-size:11px;color:#4a4a4a;font-weight:700;letter-spacing:0px;transform:scaleX(1.0332);transform-origin:0 0;">Inner Radius</div>
<div class="a" style="left:93px;top:606px;width:171px;height:22px;background:#cacaca;"></div>
<div class="t" style="left:38.8px;top:612px;font-size:10.5px;color:#4e4e4e;font-weight:400;letter-spacing:0px;transform:scaleX(1.0149);transform-origin:0 0;">From</div>
<div class="t" style="left:98.8px;top:612px;font-size:10.5px;color:#4a4a4a;font-weight:400;letter-spacing:0px;transform:scaleX(0.9990);transform-origin:0 0;">Stock ID</div>
<svg class="a" style="left:252px;top:615px;" width="8" height="6" viewBox="0 0 8 6"><path d="M0.5 0.5H6.5L3.5 4.5Z" fill="#333"/></svg>
<div class="a" style="left:96px;top:634px;width:154px;height:16px;background:#ffffff;border-top:1px solid #a8a8a8"></div>
<div class="a" style="left:250px;top:634px;width:14px;height:16px;background:#dadada;"></div>
<svg class="a" style="left:253.5px;top:636px;" width="7" height="15" viewBox="0 0 7 15"><path d="M1 4H5.5L3.25 1Z M1 11H5.5L3.25 14Z" fill="#222"/></svg>
<div class="t" style="left:38.8px;top:638px;font-size:10.5px;color:#4e4e4e;font-weight:400;letter-spacing:0px;transform:scaleX(1.0979);transform-origin:0 0;">Offset</div>
<div class="t" style="left:100.3px;top:637px;font-size:10.5px;color:#333;font-weight:400;letter-spacing:0px;transform:scaleX(1.0386);transform-origin:0 0;">0 in</div>
<div class="a" style="left:29px;top:676px;width:248px;height:1px;background:#b4b4b4;"></div>
<div class="a" style="left:29px;top:677px;width:248px;height:35px;background:#d3d3d3;"></div>
<svg class="a" style="left:42px;top:689px;" width="13" height="13" viewBox="0 0 13 13"><circle cx="6.3" cy="6.3" r="6" fill="#111"/><rect x="5.3" y="5.3" width="2.2" height="4.6" fill="#fff"/><circle cx="6.4" cy="3.3" r="1.2" fill="#fff"/></svg>
<div class="a" style="left:131px;top:685px;width:60px;height:19px;background:#e4e4e4;border:1px solid #bdbdbd"></div>
<div class="t" style="left:151.6px;top:689px;font-size:11.5px;color:#707070;font-weight:400;letter-spacing:0px;transform:scaleX(1.0468);transform-origin:0 0;">OK</div>
<div class="a" style="left:201px;top:685px;width:60px;height:19px;background:#e6e6e6;border:1px solid #bdbdbd"></div>
<div class="t" style="left:210.7px;top:689px;font-size:11.5px;color:#5a5a5a;font-weight:400;letter-spacing:0px;transform:scaleX(1.0905);transform-origin:0 0;">Cancel</div>
<svg class="a" style="left:0px;top:0px;" width="320" height="520" viewBox="0 0 320 520"><defs><filter id="sh" x="-20%" y="-50%" width="140%" height="200%"><feGaussianBlur stdDeviation="2.5"/></filter></defs><g opacity="0.28" filter="url(#sh)" transform="translate(1,2)"><ellipse cx="168" cy="365" rx="112" ry="22.6" fill="none" stroke="#000" stroke-width="3"/><ellipse cx="180.2" cy="455.5" rx="114.2" ry="29.1" fill="none" stroke="#000" stroke-width="3"/><path d="M113.5 185L106.5 262" stroke="#000" stroke-width="4"/></g><ellipse cx="168" cy="365" rx="111.5" ry="22.3" fill="none" stroke="#d81c1c" stroke-width="2.2"/><ellipse cx="180.2" cy="455.5" rx="113.7" ry="28.8" fill="none" stroke="#d81c1c" stroke-width="2.2"/><path d="M113.4 185.5L106.6 263" stroke="#f01414" stroke-width="4.6" stroke-linecap="butt"/><path d="M98 261L114 263.2L103.3 285Z" fill="#f01414"/></svg>
</body></html>
